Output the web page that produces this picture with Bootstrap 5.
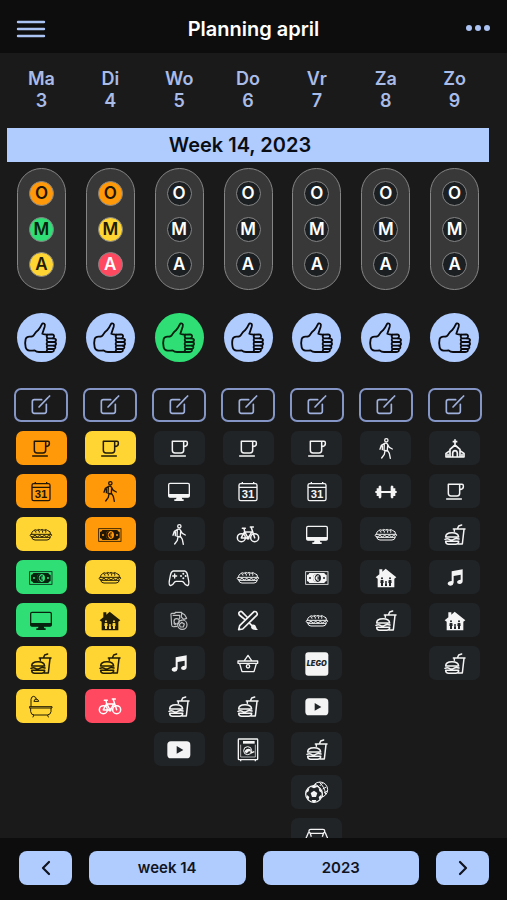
<!DOCTYPE html>
<html lang="nl">
<head>
<meta charset="utf-8">
<meta name="viewport" content="width=device-width, initial-scale=1">
<title>Planning april</title>
<link href="https://cdn.jsdelivr.net/npm/bootstrap@5.3.0/dist/css/bootstrap.min.css" rel="stylesheet">
<style>
  :root { --accent: #b0ccff; --page: #1a1a1a; --bar: #0d0d0d; }
  body { background: var(--page); color: #fff; font-family: Inter, "Liberation Sans", sans-serif; font-weight: 500; }
  .topbar { background: var(--bar); height: 53px; padding: 4px 16px 0; }
  .topbar h1 { font-size: 20px; line-height: 24px; font-weight: 600; }
  .icon-btn { color: #abc3f3; width: 30px; height: 30px; }
  .planner { padding: 0 18px 0 7px; }
  .days { color: #a9bce8; font-size: 18px; line-height: 22px; font-weight: 600; padding: 15px 0 16px; }
  .week-title { background: var(--accent); color: #0b0d14; font-size: 20px; line-height: 33px; font-weight: 600; padding: 1px 0 0; }
  .light { width: 49px; height: 122px; margin-top: 6px; padding: 12px 0; border: 1px solid #858585; border-radius: 25px; background: #383838; }
  .lamp { width: 25px; height: 25px; border: 1px solid #858585; border-radius: 50%; background: #1b1f22; color: #fff; font-size: 17px; line-height: 23px; font-weight: 600; }
  .thumb { width: 49px; height: 49px; margin-top: 23px; background: var(--accent); color: #0a0a0f; }
  .thumb svg { width: 48px; height: 48px; }
  .edit { width: 54px; height: 34px; margin-top: 26px; border: 2px solid #8495c6; border-radius: 7px; color: #9fb0dc; }
  .tasks { gap: 9px; margin-top: 9px; }
  .task { --tile: #202427; width: 51px; height: 34px; border-radius: 7px; background: var(--tile); color: #f4f4f4; }
  .task svg, .edit svg { width: 24px; height: 24px; }
  .is-orange { --tile: #ff990a; background: var(--tile); color: #211603; }
  .is-yellow { --tile: #ffd534; background: var(--tile); color: #211c05; }
  .is-green { --tile: #2fdf75; background: var(--tile); color: #07220f; }
  .is-red { --tile: #ff4961; background: var(--tile); color: #fff; }
  .bottombar { background: var(--bar); padding: 13px 18px 15px 19px; gap: 17px; }
  .bottombar .btn { height: 34px; border-radius: 8px; background: var(--accent); color: #10141f; font-size: 15px; font-weight: 600; line-height: 20px; }
  .bottombar .step { flex: 0 0 53px; }
  .bottombar .period { flex: 1 1 0; }
</style>
</head>
<body class="vh-100 d-flex flex-column overflow-hidden">

<svg class="d-none" aria-hidden="true">
  <symbol id="thumb" viewBox="14 39 144 144"><g fill="none" stroke="currentColor" stroke-width="5.5" stroke-linejoin="round" stroke-linecap="round"><path d="M40 114Q43 107 51 107Q62 108 66 100Q70 93 77 88Q83 82 88 71Q91 65 96 68Q99 70 97 77L90 98Q96 101 104 101L119 100Q126 101 125 107Q125 111 121 112Q131 112 131 117Q131 122 125 123Q132 124 131 129Q131 133 124 134Q130 135 129 140Q128 144 122 144Q126 146 124 150Q122 153 117 153L80 153Q72 153 67 148Q61 149 52 149Q42 148 40 139Q37 125 40 114Z"/><path d="M121 112H105M125 123H105M124 134H105M122 144H105M105 101Q101 105 105 111Q101 117 105 122Q101 128 105 134Q101 139 105 144Q102 149 105 153"/></g></symbol>
  <symbol id="edit" viewBox="0 0 72 72"><g fill="none" stroke="currentColor" stroke-width="5" stroke-linecap="round" stroke-linejoin="round"><path d="M38 20H16Q10 20 10 26V55Q10 61 16 61H46Q52 61 52 55V34"/><path d="M30 42L57 14M60 11L62 9"/></g></symbol>
  <symbol id="cup" viewBox="0 0 72 72"><path fill="none" stroke="currentColor" stroke-width="4.5" stroke-linecap="round" stroke-linejoin="round" d="M16 13H50V40Q50 48 42 48H24Q16 48 16 40ZM50 13H57Q61 13 61 17V21Q61 28 50 29M11 57H55"/></symbol>
  <symbol id="calendar" viewBox="0 0 72 72"><g fill="none" stroke="currentColor" stroke-width="4"><rect x="9" y="11" width="54" height="51" rx="5"/><path d="M9 22H63M19 6V12M53 6V12"/></g><text x="36" y="55" font-family="Liberation Sans, sans-serif" font-weight="700" font-size="34" text-anchor="middle" fill="currentColor">31</text></symbol>
  <symbol id="sandwich" viewBox="0 0 72 72"><g fill="none" stroke="currentColor" stroke-width="3" stroke-linejoin="round"><path d="M8 34Q6 27 14 23Q18 18 24 22Q28 17 34 21Q40 17 45 22Q50 17 55 22Q67 25 64 34M16 23Q21 23 21 29M27 21Q32 23 31 29M38 21Q42 23 41 29M48 21Q52 24 50 29"/><path d="M5 34H67Q70 37 65 40L59 37L53 42L46 37L39 42L32 37L25 42L18 37L11 41L5 40Q2 37 5 34Z"/><path d="M8 43H64Q62 51 54 51H18Q10 51 8 43Z"/></g></symbol>
  <symbol id="walk" viewBox="0 0 72 72"><g fill="none" stroke="currentColor" stroke-linecap="round" stroke-linejoin="round"><circle cx="37" cy="10" r="5" stroke-width="4"/><path stroke-width="4" d="M32 19L22 25L18 37M33 19Q39 17 41 23L46 31L55 36M41 26L40 39L46 49L49 64M33 40L31 52L23 63M40 42L30 40L31 20M25 27V38"/></g></symbol>
  <symbol id="money" viewBox="0 0 72 72"><rect x="2" y="17" width="67" height="38" fill="none" stroke="currentColor" stroke-width="2.5"/><path fill="currentColor" d="M13 21H58Q59 26 65 27V45Q59 46 58 51H13Q12 46 6 45V27Q12 26 13 21Z"/><circle cx="36" cy="36" r="12" fill="var(--tile)"/><path d="M36 24A12 12 0 0 0 36 48Q29 42 29 36T36 24Z" fill="currentColor"/><path d="M42 30Q34 27 34 36Q34 45 42 42M31 36H40" fill="none" stroke="currentColor" stroke-width="3"/><circle cx="15" cy="36" r="3" fill="var(--tile)"/><circle cx="57" cy="36" r="3" fill="var(--tile)"/></symbol>
  <symbol id="monitor" viewBox="0 0 72 72"><rect x="5" y="10" width="62" height="41" rx="4" fill="none" stroke="currentColor" stroke-width="4"/><path fill="currentColor" d="M5 42H67V49Q67 52 63 52H44L46 58H50V63H22V58H27L29 52H9Q5 52 5 49Z"/></symbol>
  <symbol id="house" viewBox="0 0 72 72"><path fill="currentColor" d="M16 10H25V17L35 8L67 34L61 38V64H11V38L5 34L16 25Z"/><g fill="var(--tile)"><circle cx="24" cy="37" r="3"/><circle cx="48" cy="37" r="3"/><circle cx="36" cy="48" r="3"/><path d="M20 42H28L29 51H27V60H21V51H19ZM44 42H52L53 51H51V60H45V51H43ZM33 52H39V60H33Z"/></g></symbol>
  <symbol id="meal" viewBox="0 0 72 72"><g fill="none" stroke="currentColor" stroke-width="4.5" stroke-linecap="round" stroke-linejoin="round"><path d="M43 18L47 9L56 6M31 18H66M34 18V25M63 19L58 63H46"/><path d="M8 42Q8 29 27 29Q46 29 47 42ZM6 49Q13 45 19 49T32 49T48 48M8 55H47Q47 64 38 64H17Q8 64 8 55"/></g></symbol>
  <symbol id="bath" viewBox="0 0 72 72"><path fill="none" stroke="currentColor" stroke-width="3" stroke-linecap="round" stroke-linejoin="round" d="M6 34V13Q7 4 14 4Q22 5 22 13M15 18Q16 12 22 12Q28 13 29 18ZM2 35H69V39H2ZM5 40V50Q6 60 16 60H55Q65 59 66 50V40M14 61L12 66M56 61L58 66"/></symbol>
  <symbol id="bike" viewBox="0 0 72 72"><g fill="none" stroke="currentColor" stroke-width="4.5" stroke-linecap="round" stroke-linejoin="round"><circle cx="16" cy="44" r="12"/><circle cx="56" cy="44" r="12"/><path d="M16 44L26 26L36 45H16M26 26L24 16M19 16H28M26 27H47M37 45L48 26M56 44L46 14M43 12H52"/></g><circle cx="36" cy="45" r="5" fill="currentColor"/></symbol>
  <symbol id="gamepad" viewBox="0 0 72 72"><g fill="none" stroke="currentColor" stroke-width="4" stroke-linecap="round" stroke-linejoin="round"><path d="M19 15H53Q61 17 63 34Q68 55 63 58Q57 61 50 49Q48 46 44 46H28Q24 46 22 49Q15 61 9 58Q4 55 9 34Q11 17 19 15ZM23 24V36M17 30H29"/></g><g fill="currentColor"><circle cx="49" cy="23" r="3"/><circle cx="49" cy="37" r="3"/><circle cx="42" cy="30" r="3"/><circle cx="56" cy="30" r="3"/></g></symbol>
  <symbol id="games" viewBox="0 0 72 72"><g fill="none" stroke="currentColor" stroke-width="3.5" opacity=".75" stroke-linejoin="round"><path d="M24 10H44V16M24 10V13H15Q11 13 12 18L14 48Q15 54 21 53L31 52M44 12L53 17L59 28L50 31L43 24ZM17 19H38V30"/><circle cx="46" cy="47" r="14"/><circle cx="29" cy="37" r="8"/><path d="M37 47L44 40L52 45L49 54H40ZM20 43L26 48M38 36L46 33"/></g></symbol>
  <symbol id="craft" viewBox="0 0 72 72"><g fill="none" stroke="currentColor" stroke-width="5" stroke-linecap="round" stroke-linejoin="round"><path d="M8 62L11 50L54 8Q61 6 63 12Q65 16 62 19L20 60ZM26 31L10 18Q6 11 12 8Q17 6 20 11L33 24M41 43L48 50"/></g><path fill="currentColor" d="M48 47Q57 44 60 53Q61 59 66 62Q51 65 46 58Q44 51 48 47Z"/></symbol>
  <symbol id="note" viewBox="0 0 72 72"><path fill="currentColor" d="M26 16L59 10V45Q59 53 50 54Q42 54 42 48Q43 42 53 41V26L32 30V50Q31 58 23 59Q14 59 14 52Q15 46 26 45Z"/></symbol>
  <symbol id="basket" viewBox="0 0 72 72"><g fill="none" stroke="currentColor" stroke-width="4" stroke-linecap="round" stroke-linejoin="round"><path d="M6 27H65V34H6ZM11 35L18 59H54L61 35M25 26L36 10L47 26"/><circle cx="36" cy="43" r="5"/></g></symbol>
  <symbol id="video" viewBox="0 0 72 72"><rect x="1" y="10" width="69" height="51" rx="11" fill="currentColor"/><path fill="var(--tile)" d="M29 24L49 36L29 47Z"/></symbol>
  <symbol id="washer" viewBox="0 0 72 72"><g fill="none" stroke="currentColor" stroke-width="4"><rect x="7" y="3" width="58" height="62" rx="2"/><circle cx="35" cy="38" r="12" stroke-width="3"/><path d="M14 66V70M58 66V70M44 45L55 41" /></g><path d="M14 20V57H58V20" fill="none" stroke="currentColor" stroke-width="2"/><rect x="21" y="9" width="35" height="8" fill="currentColor"/><path fill="currentColor" d="M26 39Q33 29 44 34L45 42Q38 36 33 46Q26 45 26 39Z"/></symbol>
  <symbol id="dumbbell" viewBox="0 0 72 72"><path fill="currentColor" d="M14 19Q19 14 22 20V33H50V20Q53 14 58 19V25H64V33H68V39H64V48H58V53Q53 58 50 52V39H22V52Q19 58 14 53V48H8V39H4V33H8V25H14Z"/></symbol>
  <symbol id="lego" viewBox="0 0 72 72"><rect x="1" y="1" width="69" height="70" rx="9" fill="currentColor"/><text x="35" y="43" font-family="Inter, sans-serif" font-weight="900" font-style="italic" font-size="22" text-anchor="middle" fill="var(--tile)">LEGO</text></symbol>
  <symbol id="ball" viewBox="0 0 72 72"><g fill="none" stroke="currentColor" stroke-width="3"><circle cx="45" cy="26" r="23"/><path d="M30 10Q48 14 53 48M43 4Q58 16 62 40M53 6L44 15M64 18L53 24M68 29L57 36"/></g><circle cx="27" cy="39" r="25" fill="var(--tile)" stroke="currentColor" stroke-width="4"/><g fill="currentColor"><path d="M27 29L37 36L33 48H21L17 36ZM16 17L27 22L38 17L27 13ZM3 36L11 31L13 20L5 28ZM51 36L43 31L41 20L49 28ZM10 58L13 48L6 42V50ZM44 58L41 48L48 42V50ZM20 57H34L31 64H23Z"/></g></symbol>
  <symbol id="sofa" viewBox="0 0 72 72"><path fill="none" stroke="currentColor" stroke-width="4" stroke-linejoin="round" d="M12 26V20Q12 16 17 16H54Q59 16 59 20V26M5 38L10 26H15L19 38M66 38L61 26H56L52 38M15 28H56M4 38V56H67V38"/></symbol>
  <symbol id="church" viewBox="0 0 72 72"><g fill="none" stroke="currentColor" stroke-width="5" stroke-linejoin="round"><path d="M36 7V24M29 14H43M21 60V37L36 24L51 37V60M21 41L9 49V60H63V49L51 41M15 50V58M57 50V58"/><path d="M29 60V48Q30 41 36 41Q42 41 43 48V60"/></g></symbol>
</svg>

<header class="topbar d-flex align-items-center justify-content-between flex-shrink-0">
  <button type="button" class="icon-btn btn p-0 border-0 d-flex align-items-center" aria-label="Menu"><svg width="30" height="18" viewBox="0 0 30 18" stroke="currentColor" stroke-width="2.4" stroke-linecap="round"><path d="M2 2H28M2 9H28M2 16H28"/></svg></button>
  <h1 class="m-0">Planning april</h1>
  <button type="button" class="icon-btn btn p-0 border-0 d-flex align-items-center justify-content-end" aria-label="Meer"><svg width="26" height="12" viewBox="0 0 26 12" fill="currentColor"><circle cx="4" cy="5" r="3"/><circle cx="13" cy="5" r="3"/><circle cx="22" cy="5" r="3"/></svg></button>
</header>

<main class="planner flex-grow-1 overflow-hidden">
  <div class="days row g-0 text-center">
    <div class="col">Ma<br>3</div><div class="col">Di<br>4</div><div class="col">Wo<br>5</div><div class="col">Do<br>6</div><div class="col">Vr<br>7</div><div class="col">Za<br>8</div><div class="col">Zo<br>9</div>
  </div>
  <h2 class="week-title m-0 text-center pe-3">Week 14, 2023</h2>

  <div class="row g-0">
    <section class="col d-flex flex-column align-items-center" aria-label="Maandag 3">
      <div class="light d-flex flex-column align-items-center justify-content-between"><span class="lamp is-orange text-center">O</span><span class="lamp is-green text-center">M</span><span class="lamp is-yellow text-center">A</span></div>
      <button type="button" class="thumb btn rounded-circle border-0 p-0" aria-label="Duim"><svg><use href="#thumb"/></svg></button>
      <button type="button" class="edit btn p-0 d-flex align-items-center justify-content-center" aria-label="Notitie"><svg><use href="#edit"/></svg></button>
      <div class="tasks d-flex flex-column">
        <button type="button" class="task is-orange btn border-0 p-0" aria-label="Koffie"><svg><use href="#cup"/></svg></button>
        <button type="button" class="task is-orange btn border-0 p-0" aria-label="Afspraak"><svg><use href="#calendar"/></svg></button>
        <button type="button" class="task is-yellow btn border-0 p-0" aria-label="Broodje"><svg><use href="#sandwich"/></svg></button>
        <button type="button" class="task is-green btn border-0 p-0" aria-label="Geld"><svg><use href="#money"/></svg></button>
        <button type="button" class="task is-green btn border-0 p-0" aria-label="Computer"><svg><use href="#monitor"/></svg></button>
        <button type="button" class="task is-yellow btn border-0 p-0" aria-label="Eten"><svg><use href="#meal"/></svg></button>
        <button type="button" class="task is-yellow btn border-0 p-0" aria-label="Bad"><svg><use href="#bath"/></svg></button>
      </div>
    </section>
    <section class="col d-flex flex-column align-items-center" aria-label="Dinsdag 4">
      <div class="light d-flex flex-column align-items-center justify-content-between"><span class="lamp is-orange text-center">O</span><span class="lamp is-yellow text-center">M</span><span class="lamp is-red text-center">A</span></div>
      <button type="button" class="thumb btn rounded-circle border-0 p-0" aria-label="Duim"><svg><use href="#thumb"/></svg></button>
      <button type="button" class="edit btn p-0 d-flex align-items-center justify-content-center" aria-label="Notitie"><svg><use href="#edit"/></svg></button>
      <div class="tasks d-flex flex-column">
        <button type="button" class="task is-yellow btn border-0 p-0" aria-label="Koffie"><svg><use href="#cup"/></svg></button>
        <button type="button" class="task is-orange btn border-0 p-0" aria-label="Wandelen"><svg><use href="#walk"/></svg></button>
        <button type="button" class="task is-orange btn border-0 p-0" aria-label="Geld"><svg><use href="#money"/></svg></button>
        <button type="button" class="task is-yellow btn border-0 p-0" aria-label="Broodje"><svg><use href="#sandwich"/></svg></button>
        <button type="button" class="task is-yellow btn border-0 p-0" aria-label="Familie"><svg><use href="#house"/></svg></button>
        <button type="button" class="task is-yellow btn border-0 p-0" aria-label="Eten"><svg><use href="#meal"/></svg></button>
        <button type="button" class="task is-red btn border-0 p-0" aria-label="Fietsen"><svg><use href="#bike"/></svg></button>
      </div>
    </section>
    <section class="col d-flex flex-column align-items-center" aria-label="Woensdag 5">
      <div class="light d-flex flex-column align-items-center justify-content-between"><span class="lamp text-center">O</span><span class="lamp text-center">M</span><span class="lamp text-center">A</span></div>
      <button type="button" class="thumb is-green btn rounded-circle border-0 p-0" aria-label="Duim"><svg><use href="#thumb"/></svg></button>
      <button type="button" class="edit btn p-0 d-flex align-items-center justify-content-center" aria-label="Notitie"><svg><use href="#edit"/></svg></button>
      <div class="tasks d-flex flex-column">
        <button type="button" class="task btn border-0 p-0" aria-label="Koffie"><svg><use href="#cup"/></svg></button>
        <button type="button" class="task btn border-0 p-0" aria-label="Computer"><svg><use href="#monitor"/></svg></button>
        <button type="button" class="task btn border-0 p-0" aria-label="Wandelen"><svg><use href="#walk"/></svg></button>
        <button type="button" class="task btn border-0 p-0" aria-label="Gamen"><svg><use href="#gamepad"/></svg></button>
        <button type="button" class="task btn border-0 p-0" aria-label="Spelletjes"><svg><use href="#games"/></svg></button>
        <button type="button" class="task btn border-0 p-0" aria-label="Muziek"><svg><use href="#note"/></svg></button>
        <button type="button" class="task btn border-0 p-0" aria-label="Eten"><svg><use href="#meal"/></svg></button>
        <button type="button" class="task btn border-0 p-0" aria-label="Video"><svg><use href="#video"/></svg></button>
      </div>
    </section>
    <section class="col d-flex flex-column align-items-center" aria-label="Donderdag 6">
      <div class="light d-flex flex-column align-items-center justify-content-between"><span class="lamp text-center">O</span><span class="lamp text-center">M</span><span class="lamp text-center">A</span></div>
      <button type="button" class="thumb btn rounded-circle border-0 p-0" aria-label="Duim"><svg><use href="#thumb"/></svg></button>
      <button type="button" class="edit btn p-0 d-flex align-items-center justify-content-center" aria-label="Notitie"><svg><use href="#edit"/></svg></button>
      <div class="tasks d-flex flex-column">
        <button type="button" class="task btn border-0 p-0" aria-label="Koffie"><svg><use href="#cup"/></svg></button>
        <button type="button" class="task btn border-0 p-0" aria-label="Afspraak"><svg><use href="#calendar"/></svg></button>
        <button type="button" class="task btn border-0 p-0" aria-label="Fietsen"><svg><use href="#bike"/></svg></button>
        <button type="button" class="task btn border-0 p-0" aria-label="Broodje"><svg><use href="#sandwich"/></svg></button>
        <button type="button" class="task btn border-0 p-0" aria-label="Knutselen"><svg><use href="#craft"/></svg></button>
        <button type="button" class="task btn border-0 p-0" aria-label="Boodschappen"><svg><use href="#basket"/></svg></button>
        <button type="button" class="task btn border-0 p-0" aria-label="Eten"><svg><use href="#meal"/></svg></button>
        <button type="button" class="task btn border-0 p-0" aria-label="Wassen"><svg><use href="#washer"/></svg></button>
      </div>
    </section>
    <section class="col d-flex flex-column align-items-center" aria-label="Vrijdag 7">
      <div class="light d-flex flex-column align-items-center justify-content-between"><span class="lamp text-center">O</span><span class="lamp text-center">M</span><span class="lamp text-center">A</span></div>
      <button type="button" class="thumb btn rounded-circle border-0 p-0" aria-label="Duim"><svg><use href="#thumb"/></svg></button>
      <button type="button" class="edit btn p-0 d-flex align-items-center justify-content-center" aria-label="Notitie"><svg><use href="#edit"/></svg></button>
      <div class="tasks d-flex flex-column">
        <button type="button" class="task btn border-0 p-0" aria-label="Koffie"><svg><use href="#cup"/></svg></button>
        <button type="button" class="task btn border-0 p-0" aria-label="Afspraak"><svg><use href="#calendar"/></svg></button>
        <button type="button" class="task btn border-0 p-0" aria-label="Computer"><svg><use href="#monitor"/></svg></button>
        <button type="button" class="task btn border-0 p-0" aria-label="Geld"><svg><use href="#money"/></svg></button>
        <button type="button" class="task btn border-0 p-0" aria-label="Broodje"><svg><use href="#sandwich"/></svg></button>
        <button type="button" class="task btn border-0 p-0" aria-label="Lego"><svg><use href="#lego"/></svg></button>
        <button type="button" class="task btn border-0 p-0" aria-label="Video"><svg><use href="#video"/></svg></button>
        <button type="button" class="task btn border-0 p-0" aria-label="Eten"><svg><use href="#meal"/></svg></button>
        <button type="button" class="task btn border-0 p-0" aria-label="Sport"><svg><use href="#ball"/></svg></button>
        <button type="button" class="task btn border-0 p-0" aria-label="Bank"><svg><use href="#sofa"/></svg></button>
      </div>
    </section>
    <section class="col d-flex flex-column align-items-center" aria-label="Zaterdag 8">
      <div class="light d-flex flex-column align-items-center justify-content-between"><span class="lamp text-center">O</span><span class="lamp text-center">M</span><span class="lamp text-center">A</span></div>
      <button type="button" class="thumb btn rounded-circle border-0 p-0" aria-label="Duim"><svg><use href="#thumb"/></svg></button>
      <button type="button" class="edit btn p-0 d-flex align-items-center justify-content-center" aria-label="Notitie"><svg><use href="#edit"/></svg></button>
      <div class="tasks d-flex flex-column">
        <button type="button" class="task btn border-0 p-0" aria-label="Wandelen"><svg><use href="#walk"/></svg></button>
        <button type="button" class="task btn border-0 p-0" aria-label="Fitness"><svg><use href="#dumbbell"/></svg></button>
        <button type="button" class="task btn border-0 p-0" aria-label="Broodje"><svg><use href="#sandwich"/></svg></button>
        <button type="button" class="task btn border-0 p-0" aria-label="Familie"><svg><use href="#house"/></svg></button>
        <button type="button" class="task btn border-0 p-0" aria-label="Eten"><svg><use href="#meal"/></svg></button>
      </div>
    </section>
    <section class="col d-flex flex-column align-items-center" aria-label="Zondag 9">
      <div class="light d-flex flex-column align-items-center justify-content-between"><span class="lamp text-center">O</span><span class="lamp text-center">M</span><span class="lamp text-center">A</span></div>
      <button type="button" class="thumb btn rounded-circle border-0 p-0" aria-label="Duim"><svg><use href="#thumb"/></svg></button>
      <button type="button" class="edit btn p-0 d-flex align-items-center justify-content-center" aria-label="Notitie"><svg><use href="#edit"/></svg></button>
      <div class="tasks d-flex flex-column">
        <button type="button" class="task btn border-0 p-0" aria-label="Kerk"><svg><use href="#church"/></svg></button>
        <button type="button" class="task btn border-0 p-0" aria-label="Koffie"><svg><use href="#cup"/></svg></button>
        <button type="button" class="task btn border-0 p-0" aria-label="Eten"><svg><use href="#meal"/></svg></button>
        <button type="button" class="task btn border-0 p-0" aria-label="Muziek"><svg><use href="#note"/></svg></button>
        <button type="button" class="task btn border-0 p-0" aria-label="Familie"><svg><use href="#house"/></svg></button>
        <button type="button" class="task btn border-0 p-0" aria-label="Eten"><svg><use href="#meal"/></svg></button>
      </div>
    </section>
  </div>
</main>

<footer class="bottombar d-flex flex-shrink-0">
  <button type="button" class="step btn border-0 p-0 d-flex align-items-center justify-content-center" aria-label="Vorige week"><svg width="10" height="16" viewBox="0 0 10 16" fill="none" stroke="currentColor" stroke-width="2.2" stroke-linecap="round" stroke-linejoin="round"><path d="M8 2L2 8L8 14"/></svg></button>
  <button type="button" class="period btn border-0 p-0">week 14</button>
  <button type="button" class="period btn border-0 p-0">2023</button>
  <button type="button" class="step btn border-0 p-0 d-flex align-items-center justify-content-center" aria-label="Volgende week"><svg width="10" height="16" viewBox="0 0 10 16" fill="none" stroke="currentColor" stroke-width="2.2" stroke-linecap="round" stroke-linejoin="round"><path d="M2 2L8 8L2 14"/></svg></button>
</footer>

<script src="https://cdn.jsdelivr.net/npm/bootstrap@5.3.0/dist/js/bootstrap.bundle.min.js"></script>
</body>
</html>
